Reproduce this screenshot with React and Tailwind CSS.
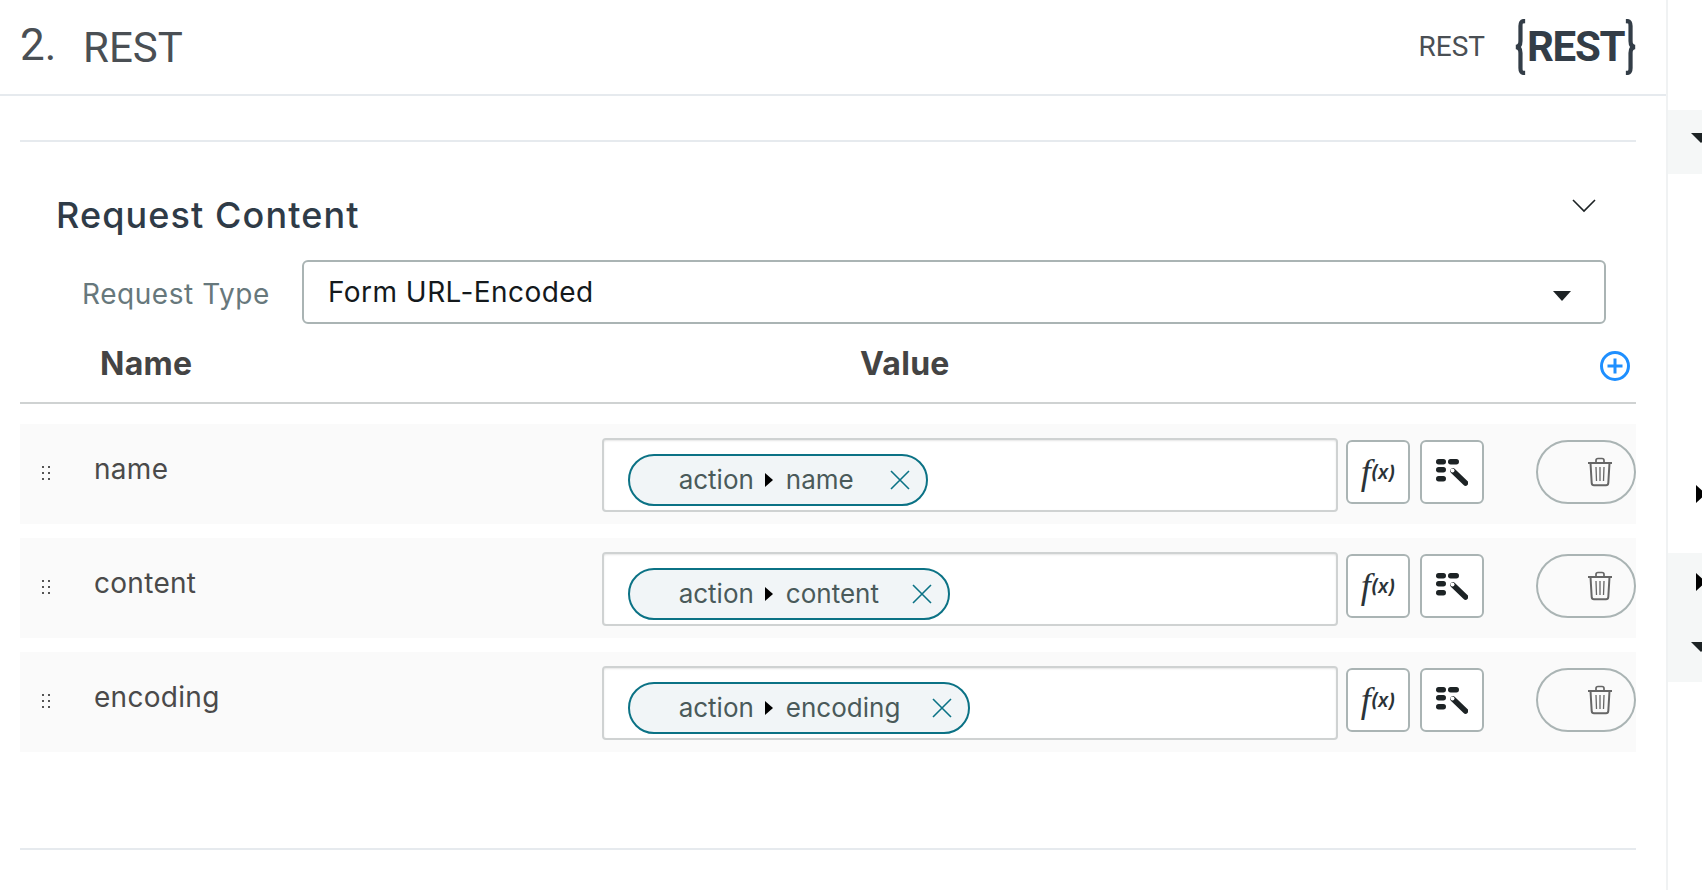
import React from 'react';

const rows = [
  { name: 'name', chipWidth: 'w-[300px]' },
  { name: 'content', chipWidth: 'w-[322px]' },
  { name: 'encoding', chipWidth: 'w-[342px]' },
];

const DragDots = () => (
  <svg width="12" height="16" viewBox="0 0 12 16" fill="#555">
    {[2, 8, 14].map((y) => (
      <g key={y}>
        <rect x="1" y={y - 1} width="2" height="2" />
        <rect x="7" y={y - 1} width="2" height="2" />
      </g>
    ))}
  </svg>
);

const TrashIcon = () => (
  <svg width="26" height="30" viewBox="0 0 26 30" fill="none" stroke="#666" strokeWidth="1.7">
    <path d="M1 6h24" strokeWidth="2" />
    <path d="M9 6V3.5C9 2 10 1.5 11 1.5h4c1 0 2 .5 2 2V6" />
    <path d="M3.5 6l1.2 20c.1 1.4 1 2.300 2.300 2.300h12c1.300 0 2.200-.9 2.300-2.300L22.500 6" strokeWidth="2" />
    <path d="M9 10l.5 14M13 10v14M17 10l-.5 14" strokeWidth="1.300" />
  </svg>
);

const WandIcon = () => (
  <svg width="32" height="28" viewBox="0 0 32 28" fill="#1d2325">
    <rect x="0" y="1" width="10" height="5.500" rx="2.700" />
    <rect x="12" y="1" width="11" height="5.500" rx="2.700" />
    <rect x="0" y="9" width="10" height="5.500" rx="2.700" />
    <rect x="0" y="18" width="10" height="5.500" rx="2.700" />
    <path d="M17 13l12.500 12" stroke="#1d2325" strokeWidth="5.500" strokeLinecap="round" />
    <circle cx="16.500" cy="12.500" r="2" fill="#fff" />
  </svg>
);

const CloseIcon = () => (
  <svg width="20" height="20" viewBox="0 0 20 20" fill="none" stroke="#0b7285" strokeWidth="1.600">
    <path d="M1 1l18 18M19 1L1 19" />
  </svg>
);

const Row = ({ name, chipWidth }) => (
  <div className="flex h-[100px] items-start bg-[#fafafa]">
    <div className="flex h-[98px] w-[74px] items-center pl-[21px]">
      <DragDots />
    </div>
    <div className="w-[508px] pt-[26px] text-[28px] leading-[38px] tracking-[0.3px] text-[#4a4a4a]">{name}</div>
    <div className="mt-[14px] flex h-[74px] w-[737px] items-start rounded-[4px] border-2 border-[#cfd2d2] bg-white pl-[24px] pt-[14px] shadow-[inset_0_1px_2px_rgba(0,0,0,0.1)]">
      <div className={`flex h-[52px] items-center rounded-full border-2 border-[#0b7285] bg-[#f1f5f7] pb-[1px] pl-[49px] text-[26px] text-[#4a5a5a] ${chipWidth}`}>
        <span>action</span>
        <span className="ml-[11px] mr-[13px] h-0 w-0 border-y-[7px] border-l-[8px] border-y-transparent border-l-black" />
        <span>{name}</span>
        <span className="ml-auto mr-[16px] flex">
          <CloseIcon />
        </span>
      </div>
    </div>
    <button className="ml-[8px] mt-[16px] flex h-[64px] w-[64px] items-center justify-center rounded-[6px] border-2 border-[#aab4b4] bg-white text-[#2b3338]">
      <span className="font-['Liberation_Serif'] text-[36px] italic leading-none">f</span>
      <span className="text-[19px] font-semibold italic leading-none">(x)</span>
    </button>
    <button className="ml-[10px] mt-[16px] flex h-[64px] w-[64px] items-center justify-center rounded-[6px] border-2 border-[#aab4b4] bg-white">
      <WandIcon />
    </button>
    <button className="ml-[52px] mt-[16px] flex h-[64px] w-[100px] items-center justify-end rounded-full border-2 border-[#aab4b4] pr-[21px]">
      <TrashIcon />
    </button>
  </div>
);

export default function App() {
  return (
    <div className="flex h-[890px] w-[1702px] overflow-hidden bg-white font-['Inter',sans-serif]">
      <main className="w-[1666px] shrink-0">
        <header className="flex h-[96px] items-center border-b-2 border-[#e6eaee] pl-5 pr-[30px] text-[#4a4f54]">
          <span className="mb-[4px] w-[63px] font-['Roboto'] text-[44px]">2.</span>
          <span className="font-['Roboto'] text-[42px]">REST</span>
          <span className="ml-auto font-['Roboto'] text-[28px]">REST</span>
          <div className="ml-[28px] flex h-[56px] w-[123px] items-center justify-between text-[#333d47]">
            <svg className="shrink-0" width="14" height="56" viewBox="0 0 15 56" preserveAspectRatio="none" fill="none" stroke="currentColor" strokeWidth="4.500">
              <path d="M13 2c-4 0-5 1-5 5v15c0 4-2 6-5 6 3 0 5 2 5 6v15c0 4 1 5 5 5" />
            </svg>
            <span className="font-['Roboto'] text-[42px] font-bold leading-none tracking-[-1.300px]">REST</span>
            <svg className="shrink-0" width="14" height="56" viewBox="0 0 15 56" preserveAspectRatio="none" fill="none" stroke="currentColor" strokeWidth="4.500">
              <path d="M2 2c4 0 5 1 5 5v15c0 4 2 6 5 6-3 0-5 2-5 6v15c0 4-1 5-5 5" />
            </svg>
          </div>
        </header>

        <div className="ml-5 mr-[30px]">
          <div className="mt-[44px] border-t-2 border-[#e6eaee]" />

          <div className="flex items-start justify-between pl-9 pr-[40px] pt-[50px]">
            <h2 className="text-[36px] font-medium leading-[46px] tracking-[1.100px] text-[#2f3b47]">Request Content</h2>
            <svg className="mt-[7px]" width="24" height="14" viewBox="0 0 24 14" fill="none" stroke="#1d2325" strokeWidth="1.600">
              <path d="M1 1l11 11L23 1" />
            </svg>
          </div>

          <div className="mt-[22px] flex items-center pl-[62px]">
            <label className="mt-[3px] w-[220px] text-[28px] tracking-[0.55px] text-[#67787c]">Request Type</label>
            <div className="flex h-[64px] w-[1304px] items-center justify-between rounded-[6px] border-2 border-[#aab4b4] pl-[24px] pr-[33px] text-[28px] tracking-[0.45px] text-[#14191c]">
              <span>Form URL-Encoded</span>
              <span className="mt-[8px] h-0 w-0 border-x-[9px] border-t-[10px] border-x-transparent border-t-[#1d2325]" />
            </div>
          </div>

          <div className="flex h-[80px] items-center border-b-2 border-[#cfd2d2] pt-[1px] text-[32px] font-bold tracking-[0.3px] text-[#444]">
            <span className="w-[840px] pl-[80px]">Name</span>
            <span>Value</span>
            <svg className="ml-auto mr-[6px] mt-[5px]" width="30" height="30" viewBox="0 0 30 30" fill="none" stroke="#1e8fff" strokeWidth="3">
              <circle cx="15" cy="15" r="13.500" />
              <path d="M15 7.500v15M7.500 15h15" />
            </svg>
          </div>

          <div className="mt-5 flex flex-col gap-[14px]">
            {rows.map((row) => (
              <Row key={row.name} {...row} />
            ))}
          </div>

          <div className="mt-[96px] border-t-2 border-[#e6eaee]" />
        </div>
      </main>

      <aside className="flex-1 border-l-2 border-[#f0f2f3]">
        <div className="mt-[110px] flex h-[64px] items-start bg-[#f5f7f7] pl-[23px] pt-[23px]">
          <span className="h-0 w-0 border-x-[10px] border-t-[10px] border-x-transparent border-t-[#1d2325]" />
        </div>
        <div className="mt-[311px] flex pl-[28px]">
          <span className="h-0 w-0 border-y-[9px] border-l-[10px] border-y-transparent border-l-black" />
        </div>
        <div className="mt-[50px] flex h-[129px] flex-col justify-between bg-[#f5f7f7] pb-[30px] pl-[23px] pt-[20px]">
          <span className="ml-[5px] h-0 w-0 border-y-[9px] border-l-[10px] border-y-transparent border-l-black" />
          <span className="h-0 w-0 border-x-[10px] border-t-[10px] border-x-transparent border-t-[#1d2325]" />
        </div>
      </aside>
    </div>
  );
}
